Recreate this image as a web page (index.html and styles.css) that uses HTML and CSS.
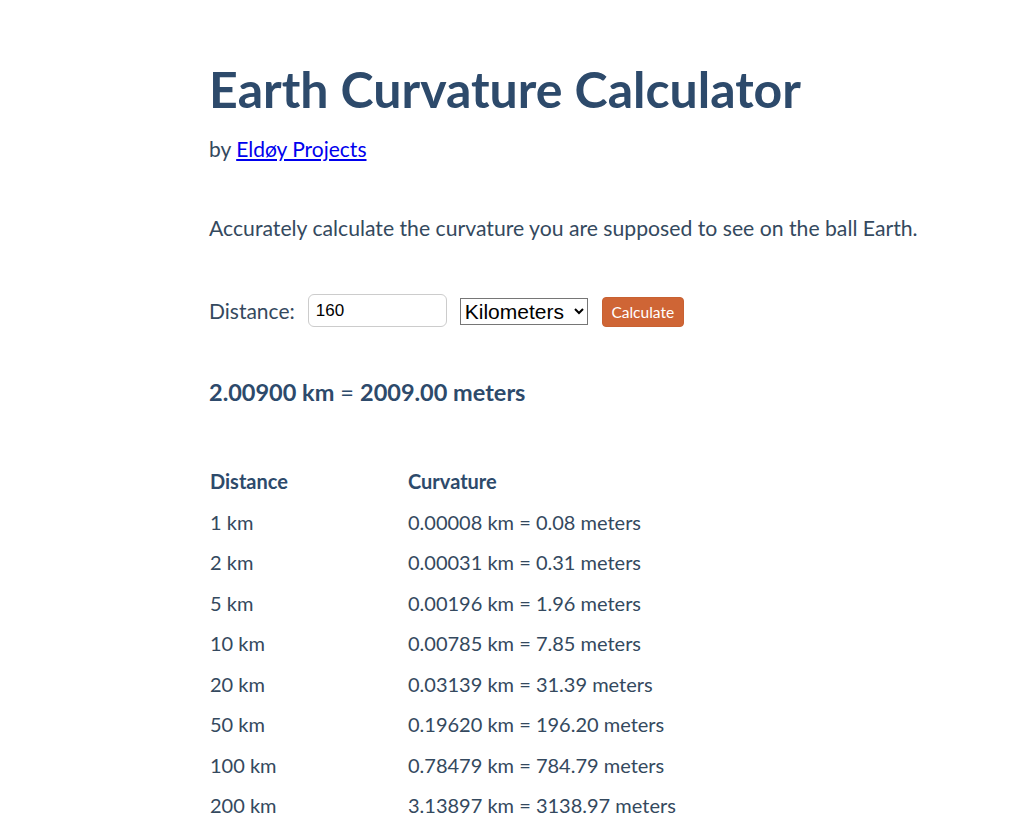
FILE: index.html
```html
<!DOCTYPE html>
<html lang="en">
<head>
  <meta charset="UTF-8" />
  <title>Earth Curvature Calculator</title>
  <link rel="stylesheet" href="styles.css">
</head>
<body>

  <main class="page">
    <h1 class="title">Earth Curvature Calculator</h1>
    <p class="byline">by <a href="#">Eldøy Projects</a></p>

    <p class="intro">Accurately calculate the curvature you are supposed to see on the ball Earth.</p>

    <form class="calc" onsubmit="return false">
      <label for="distance">Distance:</label>
      <input type="text" id="distance" value="160" />
      <select id="unit">
        <option>Kilometers</option>
        <option>Miles</option>
      </select>
      <button type="submit" class="calc-btn">Calculate</button>
    </form>

    <h3 class="result"><b>2.00900 km</b> = <b>2009.00 meters</b></h3>

    <table class="curve-table">
      <thead>
        <tr><th>Distance</th><th>Curvature</th></tr>
      </thead>
      <tbody>
        <tr><td>1 km</td><td>0.00008 km = 0.08 meters</td></tr>
        <tr><td>2 km</td><td>0.00031 km = 0.31 meters</td></tr>
        <tr><td>5 km</td><td>0.00196 km = 1.96 meters</td></tr>
        <tr><td>10 km</td><td>0.00785 km = 7.85 meters</td></tr>
        <tr><td>20 km</td><td>0.03139 km = 31.39 meters</td></tr>
        <tr><td>50 km</td><td>0.19620 km = 196.20 meters</td></tr>
        <tr><td>100 km</td><td>0.78479 km = 784.79 meters</td></tr>
        <tr><td>200 km</td><td>3.13897 km = 3138.97 meters</td></tr>
      </tbody>
    </table>
  </main>

</body>
</html>
```

FILE: styles.css
```css
html, body {
  margin: 0;
  padding: 0;
  background: #fff;
  color: #34495e;
  font-family: "Source Sans Pro", Lato, "Noto Sans", sans-serif;
  font-size: 20px;
}

.page {
  padding: 59px 0 40px 209px;
}

.title {
  margin: 0;
  font-size: 50px;
  font-weight: 700;
  line-height: 60px;
  color: #2d4a6b;
}

.byline {
  margin: 17px 0 0;
  font-size: 21px;
  line-height: 1.2;
}

.byline a {
  color: #0000ee;
}

.intro {
  margin: 55px 0 0;
  font-size: 21.2px;
  line-height: 1.2;
}

.calc {
  margin-top: 52px;
  display: flex;
  align-items: center;
}

.calc label {
  font-size: 21px;
  margin-right: 13px;
}

.calc input {
  width: 139px;
  height: 33px;
  box-sizing: border-box;
  padding: 1px 7px 0;
  border: 1px solid #ccc;
  border-radius: 6px;
  font-family: Arial, "Liberation Sans", sans-serif;
  font-size: 17px;
  color: #000;
}

.calc select {
  margin: 3px 0 0 13px;
  width: 128px;
  height: 27px;
  box-sizing: border-box;
  border: 1px solid #767676;
  border-radius: 0;
  font-family: Arial, "Liberation Sans", sans-serif;
  font-size: 21px;
  color: #000;
  background: #fff;
}

.calc-btn {
  margin: 3px 0 0 14px;
  width: 82px;
  height: 30px;
  padding: 0;
  border: 1px solid #c86132;
  border-radius: 4px;
  background: #cf6535;
  color: #fff;
  font-family: inherit;
  font-size: 15.5px;
}

.result {
  margin: 51px 0 0;
  font-size: 23.5px;
  font-weight: 400;
  line-height: 1.2;
  color: #2d4a6b;
}

.result b {
  font-weight: 700;
}

.curve-table {
  margin-top: 54px;
  margin-left: -2px;
  border-collapse: separate;
  border-spacing: 2px;
}

.curve-table th,
.curve-table td {
  padding: 1px;
  height: 36.5px;
  text-align: left;
}

.curve-table th {
  font-weight: 700;
  color: #2d4a6b;
}

.curve-table th:first-child,
.curve-table td:first-child {
  width: 194px;
}
```
